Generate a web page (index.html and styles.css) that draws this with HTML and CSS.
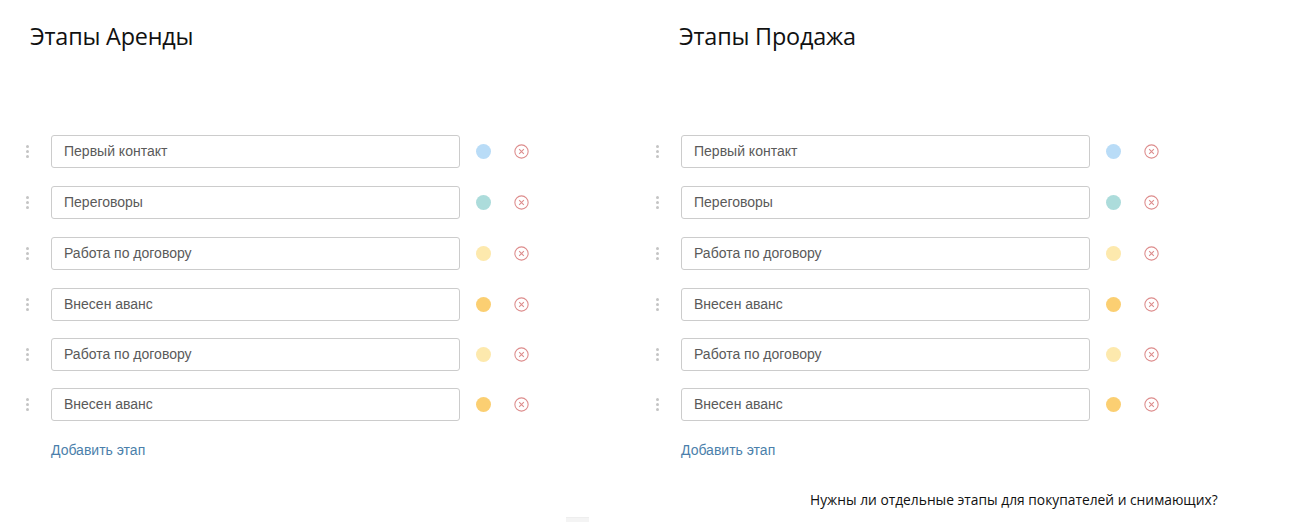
FILE: index.html
```html
<!DOCTYPE html>
<html lang="ru">
<head>
<meta charset="utf-8">
<link rel="stylesheet" href="styles.css">
</head>
<body>
<div class="page">
  <section class="col">
    <h2 class="title">Этапы Аренды</h2>
    <div class="list">
      <div class="row"><span class="handle"><i></i><i></i><i></i></span><div class="field">Первый контакт</div><span class="dot blue"></span><span class="del"><svg viewBox="0 0 14 14"><circle cx="7" cy="7" r="6.2"/><path d="M4.8 4.8l4.4 4.4M9.2 4.8l-4.4 4.4"/></svg></span></div>
      <div class="row"><span class="handle"><i></i><i></i><i></i></span><div class="field">Переговоры</div><span class="dot teal"></span><span class="del"><svg viewBox="0 0 14 14"><circle cx="7" cy="7" r="6.2"/><path d="M4.8 4.8l4.4 4.4M9.2 4.8l-4.4 4.4"/></svg></span></div>
      <div class="row"><span class="handle"><i></i><i></i><i></i></span><div class="field">Работа по договору</div><span class="dot pale"></span><span class="del"><svg viewBox="0 0 14 14"><circle cx="7" cy="7" r="6.2"/><path d="M4.8 4.8l4.4 4.4M9.2 4.8l-4.4 4.4"/></svg></span></div>
      <div class="row"><span class="handle"><i></i><i></i><i></i></span><div class="field">Внесен аванс</div><span class="dot orange"></span><span class="del"><svg viewBox="0 0 14 14"><circle cx="7" cy="7" r="6.2"/><path d="M4.8 4.8l4.4 4.4M9.2 4.8l-4.4 4.4"/></svg></span></div>
      <div class="row short"><span class="handle"><i></i><i></i><i></i></span><div class="field">Работа по договору</div><span class="dot pale"></span><span class="del"><svg viewBox="0 0 14 14"><circle cx="7" cy="7" r="6.2"/><path d="M4.8 4.8l4.4 4.4M9.2 4.8l-4.4 4.4"/></svg></span></div>
      <div class="row"><span class="handle"><i></i><i></i><i></i></span><div class="field">Внесен аванс</div><span class="dot orange"></span><span class="del"><svg viewBox="0 0 14 14"><circle cx="7" cy="7" r="6.2"/><path d="M4.8 4.8l4.4 4.4M9.2 4.8l-4.4 4.4"/></svg></span></div>
    </div>
    <a class="add">Добавить этап</a>
  </section>
  <section class="col">
    <h2 class="title">Этапы Продажа</h2>
    <div class="list">
      <div class="row"><span class="handle"><i></i><i></i><i></i></span><div class="field">Первый контакт</div><span class="dot blue"></span><span class="del"><svg viewBox="0 0 14 14"><circle cx="7" cy="7" r="6.2"/><path d="M4.8 4.8l4.4 4.4M9.2 4.8l-4.4 4.4"/></svg></span></div>
      <div class="row"><span class="handle"><i></i><i></i><i></i></span><div class="field">Переговоры</div><span class="dot teal"></span><span class="del"><svg viewBox="0 0 14 14"><circle cx="7" cy="7" r="6.2"/><path d="M4.8 4.8l4.4 4.4M9.2 4.8l-4.4 4.4"/></svg></span></div>
      <div class="row"><span class="handle"><i></i><i></i><i></i></span><div class="field">Работа по договору</div><span class="dot pale"></span><span class="del"><svg viewBox="0 0 14 14"><circle cx="7" cy="7" r="6.2"/><path d="M4.8 4.8l4.4 4.4M9.2 4.8l-4.4 4.4"/></svg></span></div>
      <div class="row"><span class="handle"><i></i><i></i><i></i></span><div class="field">Внесен аванс</div><span class="dot orange"></span><span class="del"><svg viewBox="0 0 14 14"><circle cx="7" cy="7" r="6.2"/><path d="M4.8 4.8l4.4 4.4M9.2 4.8l-4.4 4.4"/></svg></span></div>
      <div class="row short"><span class="handle"><i></i><i></i><i></i></span><div class="field">Работа по договору</div><span class="dot pale"></span><span class="del"><svg viewBox="0 0 14 14"><circle cx="7" cy="7" r="6.2"/><path d="M4.8 4.8l4.4 4.4M9.2 4.8l-4.4 4.4"/></svg></span></div>
      <div class="row"><span class="handle"><i></i><i></i><i></i></span><div class="field">Внесен аванс</div><span class="dot orange"></span><span class="del"><svg viewBox="0 0 14 14"><circle cx="7" cy="7" r="6.2"/><path d="M4.8 4.8l4.4 4.4M9.2 4.8l-4.4 4.4"/></svg></span></div>
    </div>
    <a class="add">Добавить этап</a>
    <p class="question">Нужны ли отдельные этапы для покупателей и снимающих?</p>
  </section>
</div>
<div class="grip"></div>
</body>
</html>
```

FILE: styles.css
```css
html, body {
  margin: 0;
  padding: 0;
  background: #fff;
  width: 1300px;
  height: 522px;
  overflow: hidden;
}
body {
  font-family: "Liberation Sans", Arial, sans-serif;
  position: relative;
}
.page {
  display: grid;
  grid-template-columns: 630px 670px;
}
.col {
  display: flex;
  flex-direction: column;
}
.title {
  margin: 21px 0 0 30px;
  height: 30px;
  font-family: "Open Sans", "Noto Sans", sans-serif;
  font-weight: 400;
  font-size: 23.4px;
  line-height: 30px;
  color: #111;
  letter-spacing: -0.2px;
}
.col + .col .title {
  margin-left: 49px;
}
.list {
  margin-top: 84px;
  display: flex;
  flex-direction: column;
  gap: 18px;
}
.row {
  display: flex;
  align-items: center;
  height: 33px;
}
.row.short {
  margin-top: -1px;
  margin-bottom: -1px;
}
.handle {
  width: 51px;
  display: flex;
  flex-direction: column;
  align-items: center;
  gap: 2px;
  padding-left: 3px;
  box-sizing: border-box;
}
.handle i {
  display: block;
  width: 3px;
  height: 3px;
  border-radius: 50%;
  background: #c4c4c4;
}
.field {
  box-sizing: border-box;
  width: 409px;
  height: 33px;
  border: 1px solid #ccc;
  border-radius: 3px;
  padding: 0 12px;
  font-size: 14px;
  line-height: 31px;
  color: #5a5a5a;
}
.dot {
  width: 15px;
  height: 15px;
  border-radius: 50%;
  margin-left: 16px;
}
.dot.blue { background: #b9dcf7; }
.dot.teal { background: #acdcdb; }
.dot.pale { background: #fde9ad; }
.dot.orange { background: #fbcf72; }
.del {
  width: 15px;
  height: 15px;
  margin-left: 23px;
  display: flex;
}
.del svg {
  width: 15px;
  height: 15px;
  fill: none;
  stroke: #dd8c8c;
  stroke-width: 1;
}
.add {
  margin: 21px 0 0 51px;
  font-size: 14px;
  line-height: 16px;
  color: #4b7fab;
  cursor: pointer;
}
.question {
  margin: 33px 0 0 180px;
  font-family: "Open Sans", "Noto Sans", sans-serif;
  font-size: 13.8px;
  line-height: 18px;
  color: #111;
}
.grip {
  position: absolute;
  left: 566px;
  top: 517px;
  width: 23px;
  height: 4px;
  border-top: 1px solid #eee;
  background: #f4f4f4;
}
```
